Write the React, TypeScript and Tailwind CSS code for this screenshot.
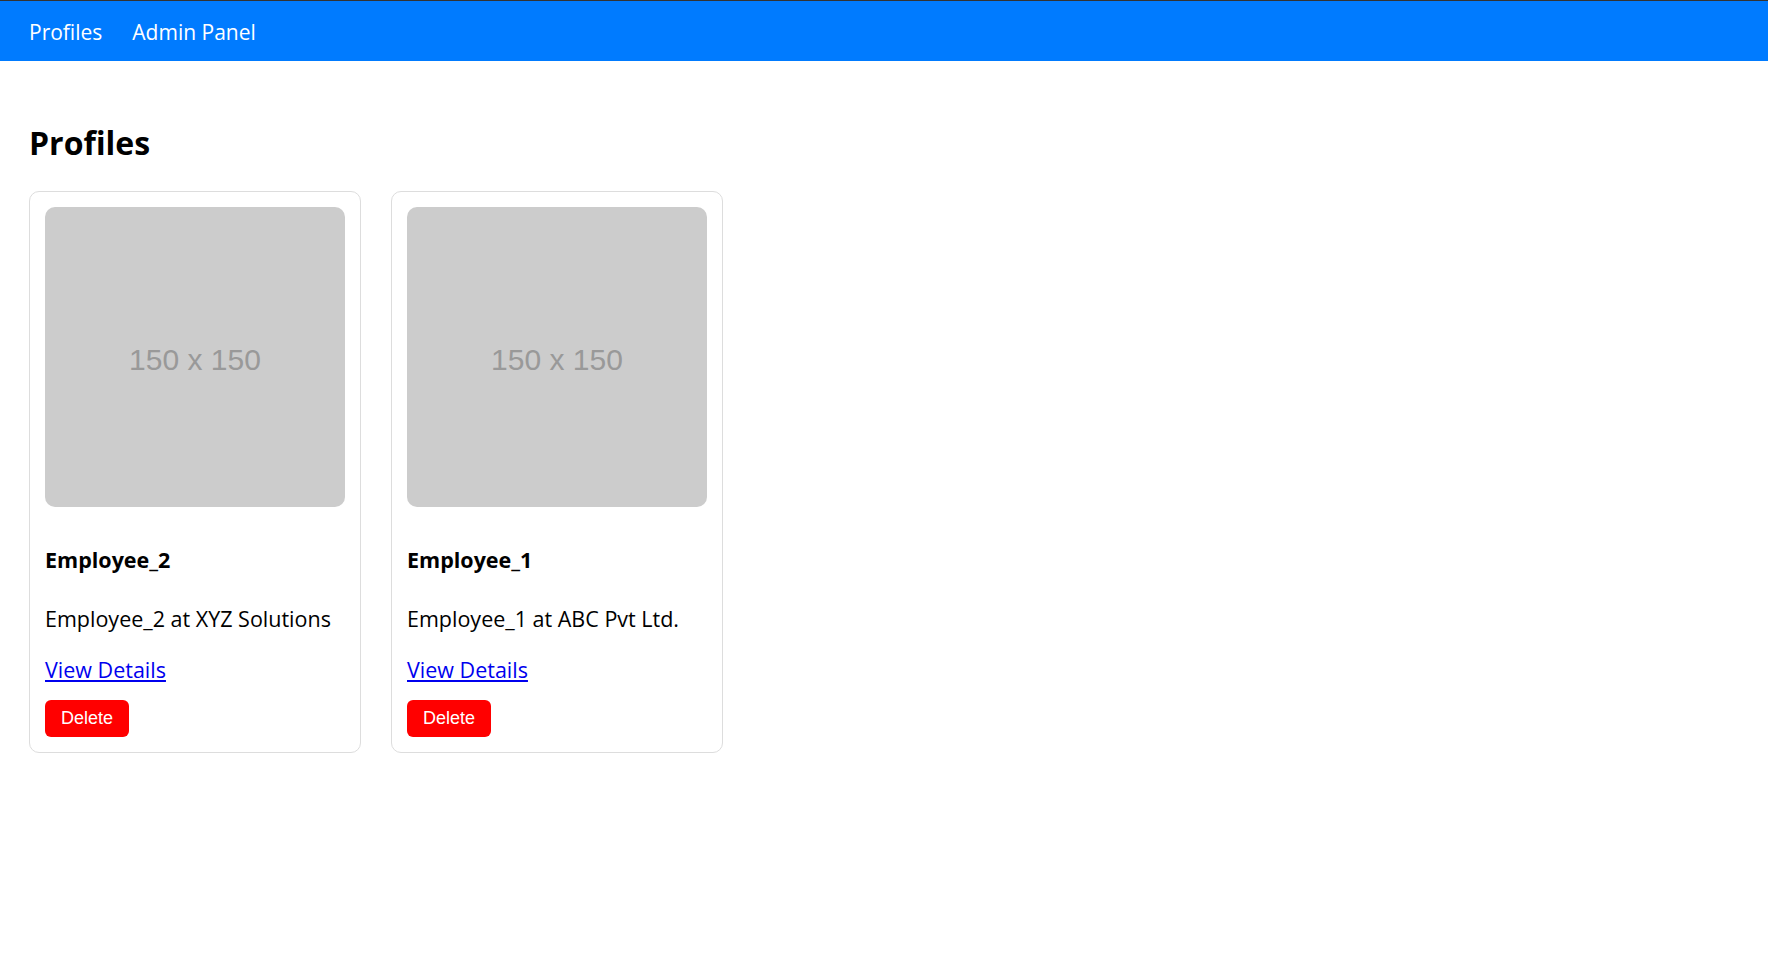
import React from 'react';

interface Profile {
  id: number;
  name: string;
  description: string;
}

const profiles: Profile[] = [
  { id: 2, name: 'Employee_2', description: 'Employee_2 at XYZ Solutions' },
  { id: 1, name: 'Employee_1', description: 'Employee_1 at ABC Pvt Ltd.' },
];

const sans = "font-['Open_Sans','Noto_Sans',sans-serif]";

const ProfileCard: React.FC<{ profile: Profile }> = ({ profile }) => (
  <div className="w-[332px] border border-[#dddddd] rounded-[10px] p-[15px]">
    {/* placeholder image */}
    <div className="w-[300px] h-[300px] rounded-[10px] bg-[#cccccc] flex items-center justify-center">
      <span className="mt-[4px] font-['Liberation_Sans',Arial,sans-serif] text-[30px] text-[#999999]">150 x 150</span>
    </div>
    <h3 className="mt-[39px] text-[21.5px] leading-[28px] font-bold text-black">{profile.name}</h3>
    <p className="mt-[31px] text-[21.5px] leading-[28px] text-black">{profile.description}</p>
    <a href="#" className="block w-fit mt-[23px] text-[21.5px] leading-[28px] text-[#0000ee] underline">
      View Details
    </a>
    <button className="mt-[16px] block bg-[#ff0000] text-white rounded-[6px] px-4 py-2 font-['Liberation_Sans',Arial,sans-serif] text-[18px] leading-[21px]">
      Delete
    </button>
  </div>
);

export default function App() {
  return (
    <div className={`min-h-screen bg-white ${sans}`}>
      {/* Navbar */}
      <nav className="h-[61px] border-t border-[#333333] bg-[#007bff] flex items-center pt-[2px] px-[29px] gap-[30px]">
        <a href="#" className="text-white text-[21px] leading-[30px]">Profiles</a>
        <a href="#" className="text-white text-[21px] leading-[30px]">Admin Panel</a>
      </nav>

      <main className="px-[29px] pt-[60px]">
        <h1 className="text-[32px] leading-[43px] font-bold text-black">Profiles</h1>
        <div className="mt-[27px] flex gap-[30px]">
          {profiles.map((p) => (
            <ProfileCard key={p.id} profile={p} />
          ))}
        </div>
      </main>
    </div>
  );
}
